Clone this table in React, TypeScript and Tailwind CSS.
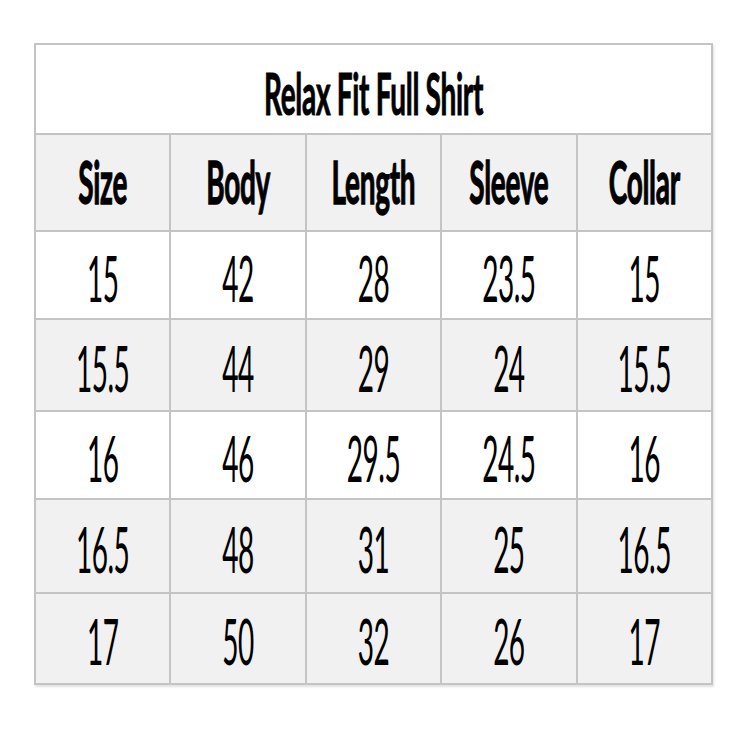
import React from 'react';

const headers = ['Size', 'Body', 'Length', 'Sleeve', 'Collar'];

const rows = [
  { cells: ['15', '42', '28', '23.5', '15'], h: 'h-[88px]', bg: 'bg-white' },
  { cells: ['15.5', '44', '29', '24', '15.5'], h: 'h-[92px]', bg: 'bg-[#f1f1f1]' },
  { cells: ['16', '46', '29.5', '24.5', '16'], h: 'h-[88px]', bg: 'bg-white' },
  { cells: ['16.5', '48', '31', '25', '16.5'], h: 'h-[94px]', bg: 'bg-[#f1f1f1]' },
  { cells: ['17', '50', '32', '26', '17'], h: 'h-[91px]', bg: 'bg-[#f1f1f1]' },
];

const cellBorder = 'border-2 border-[#c4c4c4]';

const App = () => {
  return (
    <div className="w-[750px] h-[750px] bg-white pt-[43px] pl-[34px] font-['Lato','Liberation_Sans',sans-serif] text-black">
      <table className="w-[679px] table-fixed border-collapse shadow-[1px_2px_2px_rgba(0,0,0,0.12)]">
        <tbody>
          <tr className="h-[90px] bg-white">
            <td colSpan={5} className={`${cellBorder} text-center align-middle`}>
              <span className="inline-block translate-y-[4px] scale-y-[2.05] text-[28px] font-bold leading-none tracking-[-0.3px] [-webkit-text-stroke:0.5px_black]">
                Relax Fit Full Shirt
              </span>
            </td>
          </tr>
          <tr className="h-[97px] bg-[#f1f1f1]">
            {headers.map((h) => (
              <td key={h} className={`${cellBorder} text-center align-middle`}>
                <span className="inline-block scale-y-[2.1] text-[28px] font-bold leading-none tracking-[-0.3px] [-webkit-text-stroke:0.6px_black]">
                  {h}
                </span>
              </td>
            ))}
          </tr>
          {rows.map((row, i) => (
            <tr key={i} className={`${row.h} ${row.bg}`}>
              {row.cells.map((c, j) => (
                <td key={j} className={`${cellBorder} text-center align-middle`}>
                  <span className="inline-block translate-y-[3px] scale-y-[2.25] text-[28px] font-normal leading-none tracking-[-0.5px]">
                    {c}
                  </span>
                </td>
              ))}
            </tr>
          ))}
        </tbody>
      </table>
    </div>
  );
};

export default App;
